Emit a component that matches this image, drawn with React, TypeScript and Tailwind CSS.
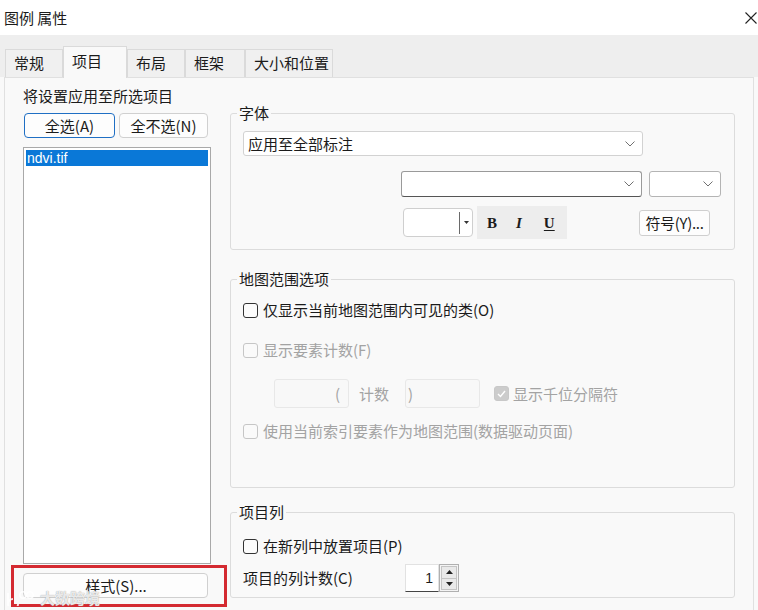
import clsx from "clsx";

function Chevron() {
  return (
    <svg width="10" height="6" viewBox="0 0 10 6" className="shrink-0">
      <polyline points="0.5,0.5 5,5 9.5,0.5" fill="none" stroke="#707070" strokeWidth="1" />
    </svg>
  );
}

function Checkbox({ checked, disabled }: { checked?: boolean; disabled?: boolean }) {
  return (
    <span
      className={clsx(
        "flex h-[15px] w-[15px] shrink-0 items-center justify-center rounded-[3px] border",
        checked && disabled && "border-[#c8c8c8] bg-[#cccccc]",
        !checked && disabled && "border-[#c6c6c6] bg-[#fafafa]",
        !disabled && "border-[#333333] bg-[#fcfcfc]"
      )}
    >
      {checked && (
        <svg width="9" height="8" viewBox="0 0 9 8">
          <polyline points="1,4 3.5,6.5 8,1" fill="none" stroke="#ffffff" strokeWidth="1.4" />
        </svg>
      )}
    </span>
  );
}

function Tab({ label, w, active }: { label: string; w: string; active?: boolean }) {
  return (
    <div
      className={clsx(
        "flex border border-b-0 border-[#dadada] pl-[8px]",
        w,
        active
          ? "relative z-10 -mb-px h-[32px] items-start bg-[#f9f9f9] pt-[4px]"
          : "h-[28px] items-center bg-[#f0f0f0] pb-[1px]"
      )}
    >
      {label}
    </div>
  );
}

function GroupBox({ title, className, children }: { title: string; className?: string; children: React.ReactNode }) {
  return (
    <fieldset className={clsx("rounded-[3px] border border-[#dcdcdc] px-[12px]", className)}>
      <legend className="-ml-[6px] px-[2px] leading-[20px]">{title}</legend>
      {children}
    </fieldset>
  );
}

export default function App() {
  return (
    <div className="relative flex h-[610px] w-[758px] flex-col overflow-hidden bg-[#f9f9f9] font-['Noto_Sans_CJK_SC','Noto_Sans',sans-serif] text-[15px] leading-[20px] text-[#1b1b1b]">
      {/* title bar */}
      <div className="flex h-[35px] shrink-0 items-center justify-between bg-white pl-[4px] pr-[1px]">
        <span>图例 属性</span>
        <svg width="12" height="12" viewBox="0 0 12 12">
          <path d="M0.5 0.5 L11.5 11.5 M11.5 0.5 L0.5 11.5" stroke="#222" strokeWidth="1.1" />
        </svg>
      </div>

      {/* tabs */}
      <div className="flex h-[42px] shrink-0 items-end bg-[#eeeeee] pl-[5px]">
        <Tab label="常规" w="w-[58px]" />
        <Tab label="项目" w="w-[64px]" active />
        <Tab label="布局" w="w-[58px]" />
        <Tab label="框架" w="w-[60px]" />
        <Tab label="大小和位置" w="w-[88px]" />
      </div>

      {/* page */}
      <div className="mx-[4px] flex flex-1 border-x border-t border-[#e0e0e0]">
        {/* left column */}
        <div className="flex w-[225px] shrink-0 flex-col pl-[18px] pt-[8px]">
          <div>将设置应用至所选项目</div>
          <div className="mt-[7px] flex gap-[4px] pl-[1px]">
            <button className="flex h-[25px] w-[91px] items-center justify-center rounded-[4px] border border-[#1f6fc4] bg-[#fdfdfd]">
              全选(A)
            </button>
            <button className="flex h-[25px] w-[89px] items-center justify-center rounded-[4px] border border-[#d0d0d0] bg-[#fdfdfd]">
              全不选(N)
            </button>
          </div>
          <div className="mt-[9px] h-[417px] w-[188px] border border-[#a9a9a9] bg-white p-[2px]">
            <div className="flex h-[16px] items-center bg-[#0a78d7] pl-[1px] font-['Liberation_Sans',sans-serif] text-[14px] text-white">
              ndvi.tif
            </div>
          </div>
          <button className="mt-[9px] flex h-[25px] w-[185px] items-center justify-center rounded-[4px] border border-[#d0d0d0] bg-[#fdfdfd] pl-[1px]">
            样式(S)...
          </button>
        </div>

        {/* right column */}
        <div className="flex w-[505px] flex-col pt-[25px]">
          <GroupBox title="字体" className="pb-[10px]">
            <div className="mt-[8px] flex h-[25px] w-[400px] items-center justify-between rounded-[3px] border border-[#d2d2d2] bg-white pl-[4px] pr-[7px]">
              <span>应用至全部标注</span>
              <Chevron />
            </div>
            <div className="ml-[158px] mt-[15px] flex gap-[7px]">
              <div className="flex h-[26px] w-[241px] items-center justify-end rounded-[3px] border border-[#9a9a9a] border-b-[#555] bg-white pr-[7px]">
                <Chevron />
              </div>
              <div className="flex h-[26px] w-[72px] items-center justify-end rounded-[3px] border border-[#b4b4b4] bg-white pr-[7px]">
                <Chevron />
              </div>
            </div>
            <div className="mt-[9px] flex h-[33px] items-center">
              <div className="ml-[160px] flex h-[29px] w-[70px] items-center justify-end rounded-[4px] border border-[#cfcfcf] bg-white pr-[3px]">
                <span className="h-[22px] w-px bg-[#6a6a6a]" />
                <svg width="5" height="3" viewBox="0 0 5 3" className="ml-[4px]">
                  <polygon points="0,0 5,0 2.5,3" fill="#333" />
                </svg>
              </div>
              <div className="ml-[4px] flex h-[33px] w-[90px] items-center bg-[#ededed] pl-[10px] font-['Liberation_Serif',serif] text-[15px] font-bold">
                <span>B</span>
                <span className="ml-[19px] italic">I</span>
                <span className="ml-[22px] underline underline-offset-2">U</span>
              </div>
              <button className="ml-auto mr-[12px] flex h-[26px] w-[71px] items-center justify-center rounded-[3px] border border-[#cfcfcf] bg-[#fdfdfd] text-[15px] tracking-[-0.3px]">
                符号(Y)...
              </button>
            </div>
          </GroupBox>

          <GroupBox title="地图范围选项" className="mt-[19px] pb-[46px]">
            <div className="mt-[11px] flex h-[20px] items-center gap-[5px]">
              <Checkbox />
              <span>仅显示当前地图范围内可见的类(O)</span>
            </div>
            <div className="mt-[20px] flex h-[20px] items-center gap-[5px] text-[#a3a3a3]">
              <Checkbox disabled />
              <span>显示要素计数(F)</span>
            </div>
            <div className="mt-[19px] flex h-[29px] items-center text-[#a3a3a3]">
              <div className="ml-[31px] flex h-[29px] w-[75px] items-center justify-end rounded-[3px] border border-[#e8e8e8] bg-[#f8f8f8] pr-[8px]">
                (
              </div>
              <span className="ml-[10px]">计数</span>
              <div className="ml-[16px] flex h-[29px] w-[75px] items-center rounded-[3px] border border-[#e8e8e8] bg-[#f8f8f8] pl-[2px]">
                )
              </div>
              <span className="ml-[14px]">
                <Checkbox checked disabled />
              </span>
              <span className="ml-[4px]">显示千位分隔符</span>
            </div>
            <div className="mt-[13px] flex h-[20px] items-center gap-[5px] text-[#a3a3a3]">
              <Checkbox disabled />
              <span>使用当前索引要素作为地图范围(数据驱动页面)</span>
            </div>
          </GroupBox>

          <GroupBox title="项目列" className="mt-[14px] pb-[5px]">
            <div className="mt-[14px] flex h-[20px] items-center gap-[5px]">
              <Checkbox />
              <span>在新列中放置项目(P)</span>
            </div>
            <div className="mt-[8px] flex h-[28px] items-center">
              <span className="w-[162px]">项目的列计数(C)</span>
              <div className="flex h-[28px] w-[34px] items-center justify-end border border-[#e2e2e2] border-b-[#444] bg-white pr-[5px] font-['Liberation_Sans',sans-serif] text-[14px]">
                1
              </div>
              <div className="flex h-[28px] w-[20px] flex-col border border-[#b0b0b0] bg-[#f4f4f4] p-[1px]">
                <div className="flex flex-1 items-center justify-center border border-[#c4c4c4] bg-[#e9e9e9]">
                  <svg width="7" height="4" viewBox="0 0 7 4">
                    <polygon points="0,4 7,4 3.5,0" fill="#222" />
                  </svg>
                </div>
                <div className="flex flex-1 items-center justify-center border border-t-0 border-[#c4c4c4] bg-[#e9e9e9]">
                  <svg width="7" height="4" viewBox="0 0 7 4">
                    <polygon points="0,0 7,0 3.5,4" fill="#222" />
                  </svg>
                </div>
              </div>
            </div>
          </GroupBox>
        </div>
      </div>

      {/* red highlight */}
      <div className="pointer-events-none absolute left-[11px] top-[565px] h-[42px] w-[216px] border-[3px] border-[#d42a31]" />

      {/* watermark */}
      <div className="pointer-events-none absolute left-[5px] top-[590px] flex items-center gap-[3px] text-[15px] font-bold leading-[16px] text-white/80 [text-shadow:0_0_1px_#8a8a8a]">
        <svg width="32" height="16" viewBox="0 0 32 16">
          <path d="M3 3 V15 M8 9 A5 5 0 1 0 13 14" fill="none" stroke="#fff" strokeWidth="2" opacity="0.85" />
          <circle cx="18" cy="5" r="3.2" fill="none" stroke="#fff" strokeWidth="1.6" opacity="0.85" />
          <circle cx="25" cy="5" r="3.2" fill="none" stroke="#fff" strokeWidth="1.6" opacity="0.85" />
        </svg>
        <span>大数跨境</span>
      </div>
    </div>
  );
}
